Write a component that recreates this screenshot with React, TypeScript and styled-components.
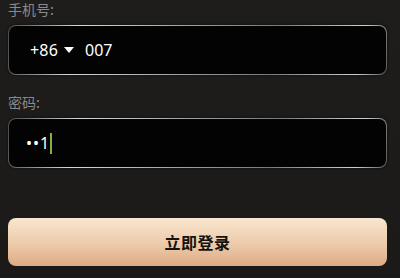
import React from "react";
import styled, { createGlobalStyle } from "styled-components";

const Global = createGlobalStyle`
  html, body { margin: 0; padding: 0; background: #1c1b1a; }
  body { font-family: "Noto Sans", "Noto Sans CJK SC", sans-serif; }
`;

const Page = styled.div`
  width: 400px;
  height: 278px;
  box-sizing: border-box;
  padding: 1px 13px 0 8px;
  display: flex;
  flex-direction: column;
  background: linear-gradient(180deg, #1e1d1b 0%, #1b1a19 100%);
  overflow: hidden;
`;

const Label = styled.div<{ $top: number }>`
  margin-top: ${(p) => p.$top}px;
  height: 16px;
  line-height: 16px;
  font-size: 14px;
  color: #8a8a8a;
  font-family: "Noto Sans CJK SC", sans-serif;
  margin-bottom: 8px;
`;

const Field = styled.div`
  height: 50px;
  box-sizing: border-box;
  border-radius: 8px;
  border: 1px solid transparent;
  background:
    linear-gradient(#030303, #030303) padding-box,
    linear-gradient(100deg, #4a4a4a 0%, #d8d8d8 18%, #9a9a9a 50%, #7a7a7a 70%, #d0d0d0 92%, #5a5a5a 100%) border-box;
  box-shadow: 0 0 3px rgba(0, 0, 0, 0.6);
  display: flex;
  align-items: center;
  color: #fff;
  font-size: 16px;
`;

const PhoneRow = styled.div`
  display: flex;
  align-items: center;
  padding-left: 21px;
`;

const Code = styled.span`
  font-family: "Noto Sans", sans-serif;
  letter-spacing: 0.2px;
`;

const Caret = styled.svg`
  margin: 0 11px 0 6px;
`;

const Value = styled.span`
  font-family: "Noto Sans", sans-serif;
`;

const PwdRow = styled.div`
  display: flex;
  align-items: center;
  padding-left: 17px;
`;

const Dots = styled.span`
  font-family: "Noto Sans", sans-serif;
  font-size: 16px;
  letter-spacing: 1px;
`;

const Cursor = styled.span`
  display: inline-block;
  width: 2px;
  height: 21px;
  margin-left: 0;
  background: #7cb342;
`;

const Button = styled.button`
  margin-top: 50px;
  height: 48px;
  width: 100%;
  border: none;
  border-radius: 8px;
  background: linear-gradient(180deg, #f8e6cf 0%, #eccaaa 55%, #deab84 100%);
  font-family: "Noto Sans CJK SC", sans-serif;
  font-weight: 700;
  font-size: 16px;
  color: #151311;
  letter-spacing: 0.5px;
  padding: 0;
`;

export default function App() {
  return (
    <>
      <Global />
      <Page>
        <Label $top={0}>手机号:</Label>
        <Field>
          <PhoneRow>
            <Code>+86</Code>
            <Caret width="10" height="6" viewBox="0 0 10 6">
              <path d="M0 0 L10 0 L5 6 Z" fill="#fff" />
            </Caret>
            <Value>007</Value>
          </PhoneRow>
        </Field>
        <Label $top={19}>密码:</Label>
        <Field>
          <PwdRow>
            <Dots>••1</Dots>
            <Cursor />
          </PwdRow>
        </Field>
        <Button>立即登录</Button>
      </Page>
    </>
  );
}
